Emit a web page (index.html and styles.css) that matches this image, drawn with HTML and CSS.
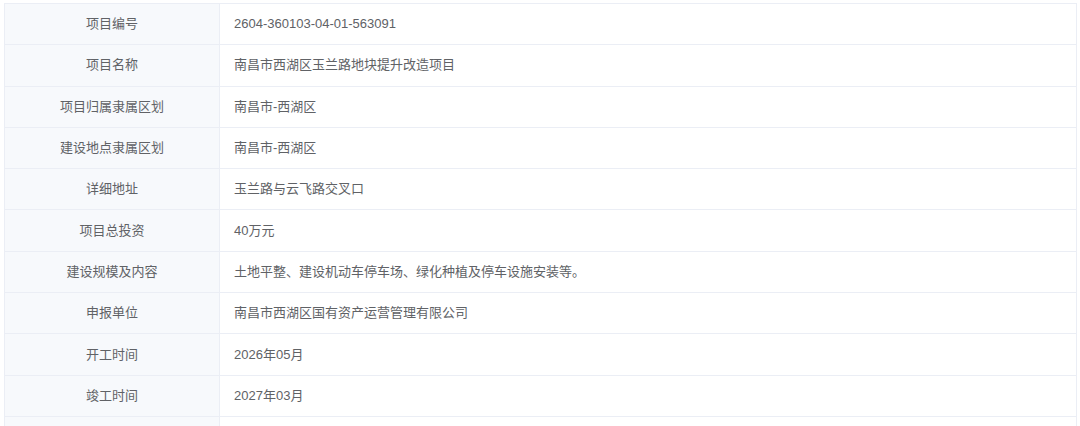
FILE: index.html
```html
<!DOCTYPE html>
<html>
	<head>
		<meta charset="UTF-8">
		<title>项目信息</title>
		<link rel="stylesheet" href="styles.css">
	</head>
	<body>
		<div class="wrap">
			<table class="info">
				<tr><td class="label">项目编号</td><td class="value">2604-360103-04-01-563091</td></tr>
				<tr><td class="label">项目名称</td><td class="value">南昌市西湖区玉兰路地块提升改造项目</td></tr>
				<tr><td class="label">项目归属隶属区划</td><td class="value">南昌市-西湖区</td></tr>
				<tr><td class="label">建设地点隶属区划</td><td class="value">南昌市-西湖区</td></tr>
				<tr><td class="label">详细地址</td><td class="value">玉兰路与云飞路交叉口</td></tr>
				<tr><td class="label">项目总投资</td><td class="value">40万元</td></tr>
				<tr><td class="label">建设规模及内容</td><td class="value">土地平整、建设机动车停车场、绿化种植及停车设施安装等。</td></tr>
				<tr><td class="label">申报单位</td><td class="value">南昌市西湖区国有资产运营管理有限公司</td></tr>
				<tr><td class="label">开工时间</td><td class="value">2026年05月</td></tr>
				<tr><td class="label">竣工时间</td><td class="value">2027年03月</td></tr>
				<tr><td class="label">&nbsp;</td><td class="value">&nbsp;</td></tr>
			</table>
		</div>
	</body>
</html>
```

FILE: styles.css
```css
*{
	margin: 0;
	padding: 0;
}

body{
	background-color: #fff;
	font-family: "Liberation Sans", "Noto Sans CJK SC", sans-serif;
	font-size: 13px;
	color: #606266;
	overflow: hidden;
}

.wrap{
	padding: 3px 3px 0 4px;
}

.info{
	width: 1073px;
	border-collapse: collapse;
	border: 1px solid #ebeef5;
}

.info td{
	height: 40.3px;
	border: 1px solid #ebeef5;
	line-height: 20px;
}

.info .label{
	width: 214px;
	text-align: center;
	background-color: #f7f9fc;
}

.info .value{
	padding-left: 14px;
	text-align: left;
}
```
